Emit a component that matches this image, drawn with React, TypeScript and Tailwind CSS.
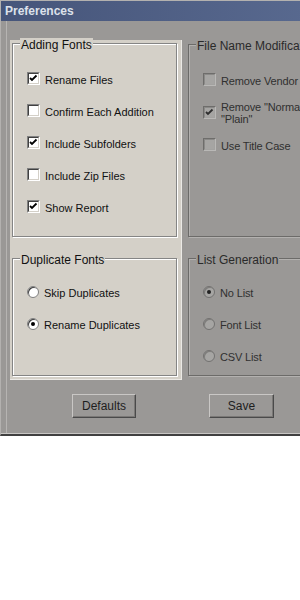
import React from 'react'

const face = "font-['Liberation_Sans',Arial,sans-serif]"

function CheckMark(props: { color: string }) {
  return (
    <svg width="9" height="9" viewBox="0 0 9 9" className="block">
      <path d="M1 4 L3 6 L7.5 1.5" stroke={props.color} strokeWidth="1.8" fill="none" />
    </svg>
  )
}

function Box(props: { checked?: boolean; off?: boolean }) {
  const shell = props.off
    ? 'border-t-[#6e6d6b] border-l-[#6e6d6b] border-b-[#b9b8b6] border-r-[#b9b8b6]'
    : 'border-t-[#808080] border-l-[#808080] border-b-white border-r-white'
  const inner = props.off
    ? 'border-t-[#8a8987] border-l-[#8a8987] border-b-[#a3a2a0] border-r-[#a3a2a0] bg-[#a6a5a3]'
    : 'border-t-[#404040] border-l-[#404040] border-b-[#d4d0c8] border-r-[#d4d0c8] bg-white'
  return (
    <div className={`h-[13px] w-[13px] shrink-0 border ${shell}`}>
      <div className={`flex h-full w-full items-center justify-center border ${inner}`}>
        {props.checked ? <CheckMark color={props.off ? '#2e2e2e' : '#000'} /> : null}
      </div>
    </div>
  )
}

function Radio(props: { on?: boolean; off?: boolean }) {
  const cls = props.off
    ? 'border-[#727170] bg-[#a6a5a3] shadow-[inset_1px_1px_0_#7e7d7b]'
    : 'border-[#808080] bg-white shadow-[inset_1px_1px_0_#404040]'
  return (
    <div className={`flex h-[12px] w-[12px] shrink-0 items-center justify-center rounded-full border ${cls}`}>
      {props.on ? <div className={`h-[4px] w-[4px] rounded-full ${props.off ? 'bg-[#222]' : 'bg-black'}`} /> : null}
    </div>
  )
}

function Group(props: { title: string; dark?: boolean; className?: string; children: React.ReactNode }) {
  const edge = props.dark
    ? 'border-[#6c6b69] shadow-[inset_1px_1px_0_#b3b1af,1px_1px_0_#b3b1af]'
    : 'border-[#858585] shadow-[inset_1px_1px_0_#fff,1px_1px_0_#fff]'
  return (
    <div className={`relative border ${edge} ${props.className ?? ''}`}>
      <span
        className={`absolute -top-[6px] left-[7px] whitespace-nowrap px-[1px] text-[12px] leading-[14px] ${
          props.dark ? 'bg-[#9a9896] text-[#2a2a2a]' : 'bg-[#d4d0c8] text-[#111]'
        }`}
      >
        {props.title}
      </span>
      {props.children}
    </div>
  )
}

function Row(props: { children: React.ReactNode; text: React.ReactNode; dim?: boolean }) {
  return (
    <div className="flex items-center gap-[5px]">
      {props.children}
      <span
        className={`translate-y-[1px] whitespace-nowrap text-[11px] leading-[12px] ${
          props.dim ? 'tracking-[-0.15px] text-[#303030]' : 'text-[#111]'
        }`}
      >
        {props.text}
      </span>
    </div>
  )
}

function Btn(props: { label: string; className?: string }) {
  return (
    <div
      className={`flex h-[24px] items-center justify-center border border-t-[#c9c7c5] border-l-[#c9c7c5] border-b-[#4a4a4a] border-r-[#4a4a4a] bg-[#9a9896] text-[12px] text-[#1e1e1e] shadow-[inset_-1px_-1px_0_#7a7876] ${
        props.className ?? ''
      }`}
    >
      {props.label}
    </div>
  )
}

export default function App() {
  return (
    <div className={`h-[600px] w-[300px] overflow-hidden bg-white ${face}`}>
      <div className="flex h-[436px] w-[340px] flex-col border-l border-t border-b-2 border-[#b3b1af] border-b-[#404040] bg-[#9a9896]">
        <div className="flex h-[20px] shrink-0 items-center bg-gradient-to-r from-[#46557a] to-[#5a6b91] pl-[4px] text-[12px] font-bold text-[#dde1ea]">
          Preferences
        </div>
        <div className="flex flex-1 flex-col border-b border-[#c8c6c4]">
          <div className="ml-[5px] flex flex-1 flex-col border-l border-[#b6b4b2]">
            <div className="flex items-start pl-[3px] pt-[19px]">
              <div className="flex w-[172px] flex-col border-b border-r border-[#ebe9e5] bg-[#d4d0c8] pb-[3px] pl-[2px] pt-[3px]">
                <Group title="Adding Fonts" className="h-[194px] w-[165px]">
                  <div className="flex flex-col gap-[19px] pl-[14px] pt-[28px]">
                    <Row text="Rename Files"><Box checked /></Row>
                    <Row text="Confirm Each Addition"><Box /></Row>
                    <Row text="Include Subfolders"><Box checked /></Row>
                    <Row text="Include Zip Files"><Box /></Row>
                    <Row text="Show Report"><Box checked /></Row>
                  </div>
                </Group>
                <Group title="Duplicate Fonts" className="mt-[21px] h-[118px] w-[165px]">
                  <div className="flex flex-col gap-[20px] pl-[14px] pt-[27px]">
                    <Row text="Skip Duplicates"><Radio /></Row>
                    <Row text="Rename Duplicates"><Radio on /></Row>
                  </div>
                </Group>
              </div>
              <div className="ml-[6px] flex flex-col pt-[4px]">
                <Group title="File Name Modification" dark className="h-[193px] w-[150px]">
                  <div className="flex flex-col gap-[14px] pl-[14px] pt-[28px]">
                    <Row dim text="Remove Vendor"><Box off /></Row>
                    <Row
                      dim
                      text={
                        <>
                          Remove "Normal" and
                          <br />
                          "Plain"
                        </>
                      }
                    >
                      <Box checked off />
                    </Row>
                    <Row dim text="Use Title Case"><Box off /></Row>
                  </div>
                </Group>
                <Group title="List Generation" dark className="mt-[21px] h-[118px] w-[150px]">
                  <div className="flex flex-col gap-[20px] pl-[14px] pt-[27px]">
                    <Row dim text="No List"><Radio on off /></Row>
                    <Row dim text="Font List"><Radio off /></Row>
                    <Row dim text="CSV  List"><Radio off /></Row>
                  </div>
                </Group>
              </div>
            </div>
            <div className="mt-[14px] flex pl-[65px]">
              <Btn label="Defaults" className="w-[64px]" />
              <Btn label="Save" className="ml-[73px] w-[65px]" />
            </div>
          </div>
        </div>
      </div>
    </div>
  )
}
